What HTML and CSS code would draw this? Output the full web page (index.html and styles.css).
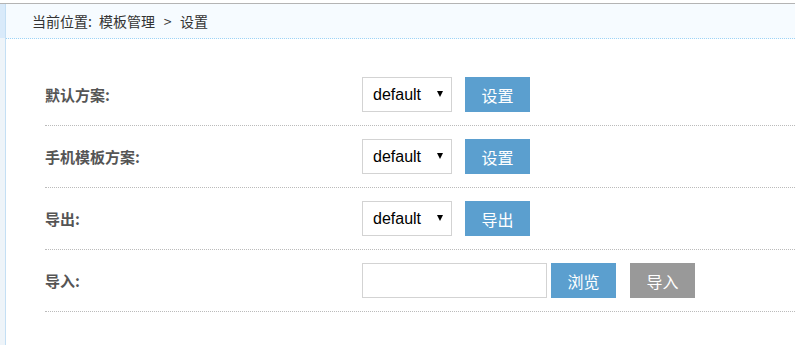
FILE: index.html
```html
<!DOCTYPE html>
<html lang="zh-CN">
<head>
    <meta charset="UTF-8">
    <title>模板管理 - 设置</title>
    <link rel="stylesheet" href="styles.css">
</head>
<body>
    <div class="frame">
        <div class="side"></div>
        <div class="main">
            <div class="crumb">当前位置: 模板管理 <span class="sep">&gt;</span> 设置</div>
            <div class="form">
                <div class="row">
                    <label class="label">默认方案:</label>
                    <span class="select"><select><option>default</option></select></span>
                    <button class="btn">设置</button>
                </div>
                <div class="row">
                    <label class="label">手机模板方案:</label>
                    <span class="select"><select><option>default</option></select></span>
                    <button class="btn">设置</button>
                </div>
                <div class="row">
                    <label class="label">导出:</label>
                    <span class="select"><select><option>default</option></select></span>
                    <button class="btn">导出</button>
                </div>
                <div class="row">
                    <label class="label">导入:</label>
                    <input class="file" type="text">
                    <button class="btn browse">浏览</button>
                    <button class="btn gray">导入</button>
                </div>
            </div>
        </div>
    </div>
</body>
</html>
```
FILE: styles.css
```css
* {
    box-sizing: border-box;
}

body {
    margin: 0;
    padding-top: 3px;
    background: #fff;
    font-family: "Noto Sans CJK SC", sans-serif;
    color: #333;
}

.frame {
    display: flex;
    border-top: 1px solid #b4b4b4;
    min-height: 342px;
}

.side {
    width: 6px;
    flex-shrink: 0;
    border-right: 1px solid #c4dff4;
    background: linear-gradient(#d9eafa 0, #d9eafa 34px, #eef4f9 34px);
}

.main {
    flex: 1;
}

.crumb {
    height: 35px;
    line-height: 34px;
    padding-left: 26px;
    font-size: 14px;
    word-spacing: 4px;
    color: #333;
    background: #f6fbff;
    border-bottom: 1px dotted #9dd3f6;
}

.crumb .sep {
    padding: 0 1.5px;
}

.form {
    padding: 25px 0 0 39px;
}

.row {
    display: flex;
    align-items: center;
    height: 62px;
    border-bottom: 1px dotted #bbb;
}

.label {
    width: 317px;
    font-size: 15px;
    font-weight: bold;
    color: #555;
}

.select {
    position: relative;
    width: 90px;
    height: 35px;
    margin-right: 13px;
}

.select select {
    appearance: none;
    width: 100%;
    height: 100%;
    padding: 0 0 0 10px;
    border: 1px solid #d3d3d3;
    background: #fff;
    font-family: "Liberation Sans", sans-serif;
    font-size: 16px;
    color: #000;
    outline: none;
}

.select::after {
    content: "";
    position: absolute;
    right: 9px;
    top: 14px;
    border-left: 3px solid transparent;
    border-right: 3px solid transparent;
    border-top: 6px solid #000;
    pointer-events: none;
}

.btn {
    width: 65px;
    height: 35px;
    border: none;
    padding: 0;
    background: #5b9fcf;
    color: #fff;
    font-family: "Noto Sans CJK SC", sans-serif;
    font-size: 16px;
    cursor: pointer;
}

.file {
    width: 185px;
    height: 35px;
    margin-right: 4px;
    border: 1px solid #d3d3d3;
    outline: none;
}

.btn.browse {
    margin-right: 14px;
}

.btn.gray {
    background: #999;
}
```
